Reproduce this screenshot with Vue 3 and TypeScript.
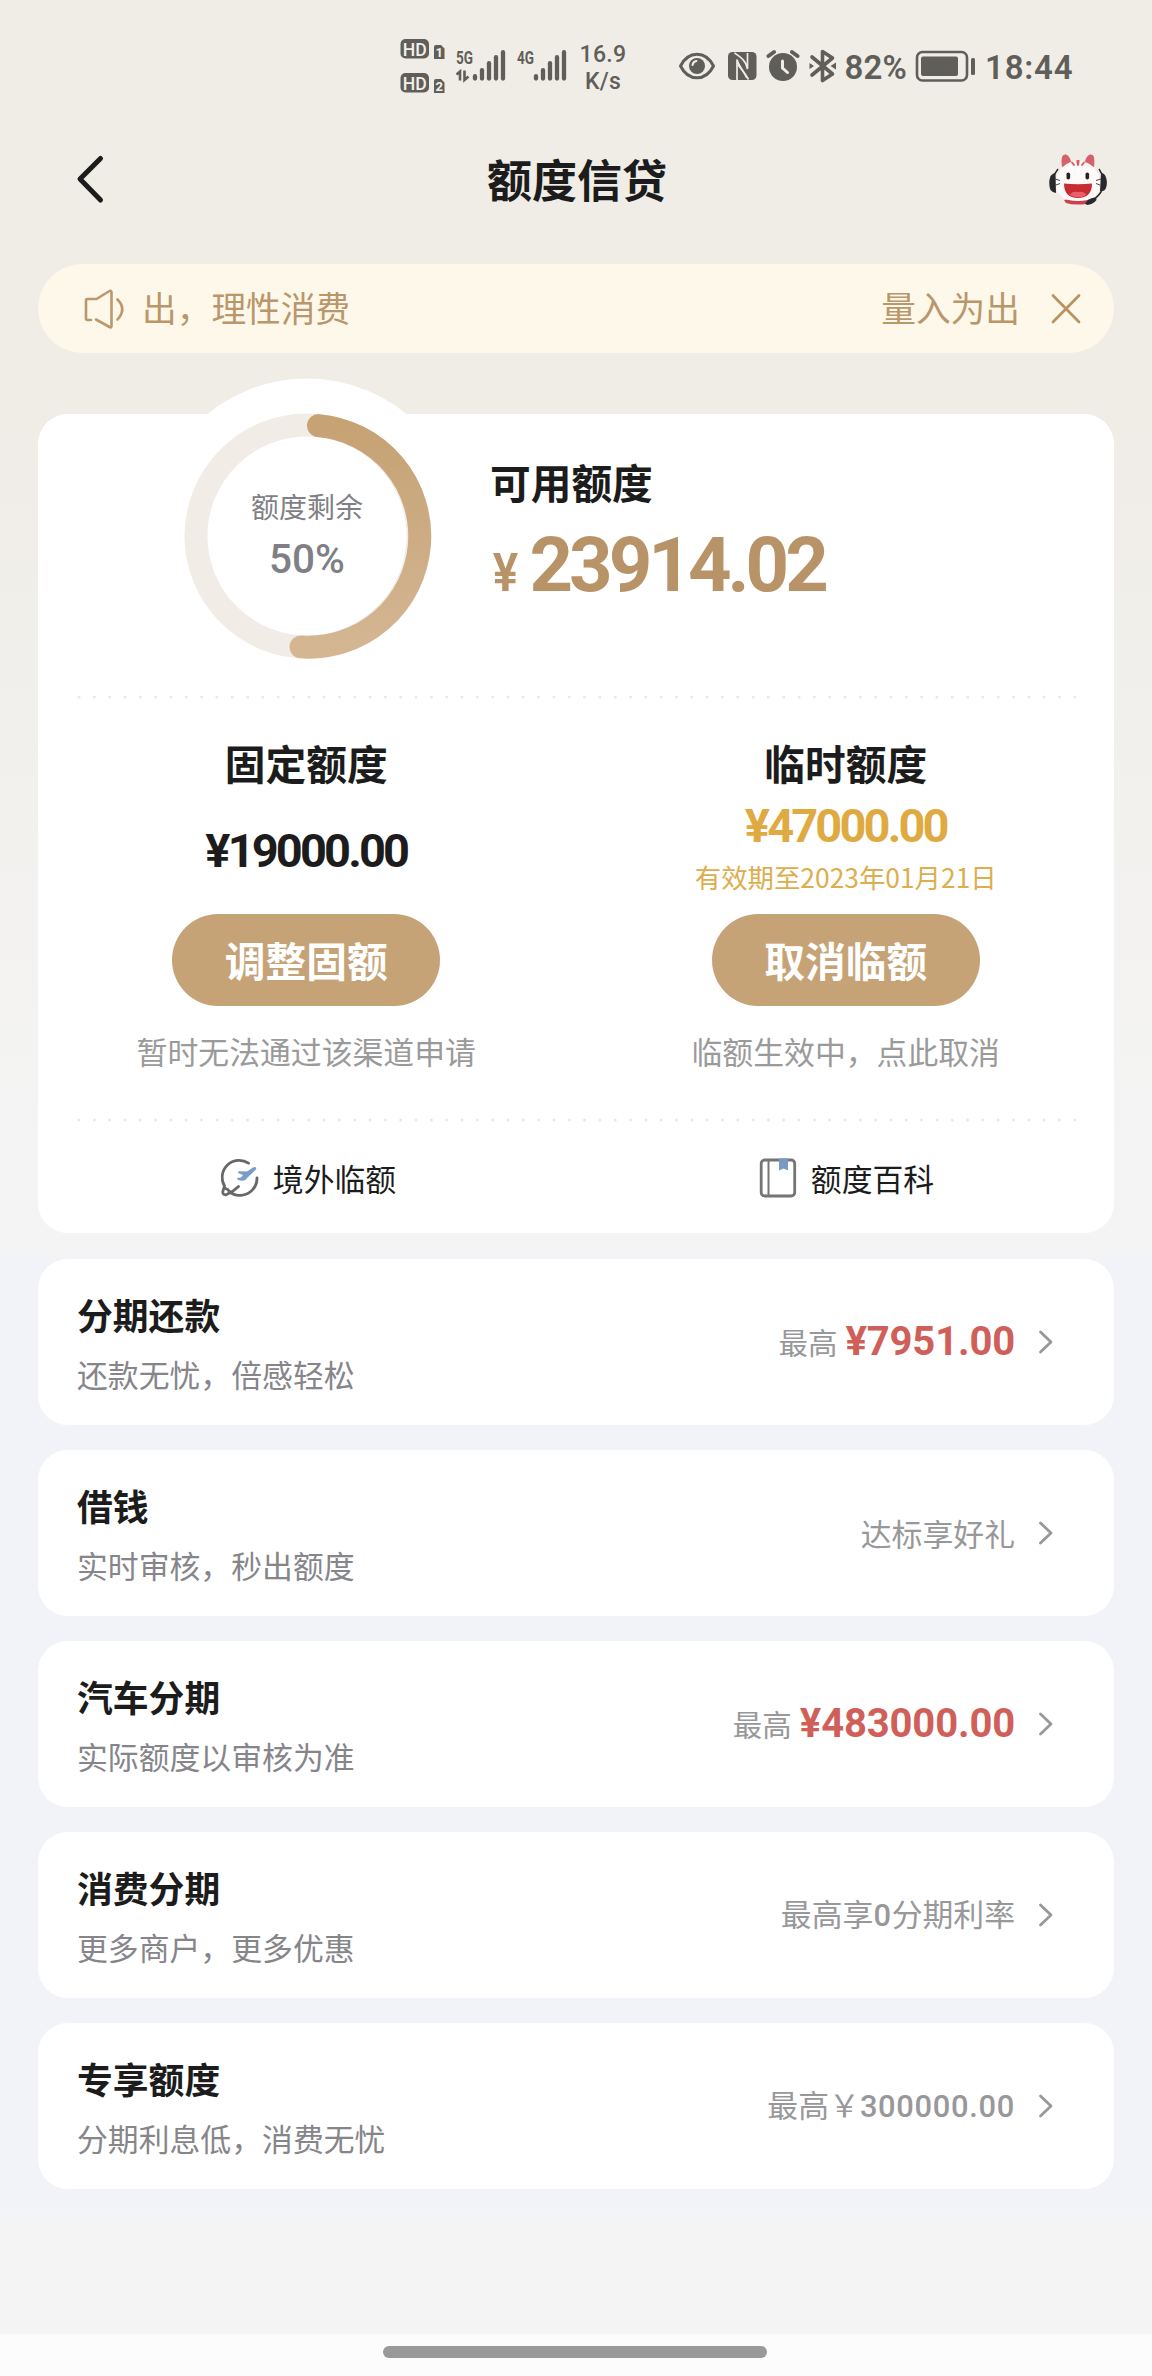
<script setup lang="ts">
interface Quota {
  title: string
  amount: string
  validity?: string
  action: string
  hint: string
  highlighted: boolean
}

interface Note {
  before: string
  number?: string
  after?: string
}

interface Product {
  title: string
  subtitle: string
  label?: string
  amount?: string
  note?: Note
}

const quotas: Quota[] = [
  { title: '固定额度', amount: '¥19000.00', action: '调整固额', hint: '暂时无法通过该渠道申请', highlighted: false },
  { title: '临时额度', amount: '¥47000.00', validity: '有效期至2023年01月21日', action: '取消临额', hint: '临额生效中，点此取消', highlighted: true },
]

const products: Product[] = [
  { title: '分期还款', subtitle: '还款无忧，倍感轻松', label: '最高', amount: '¥7951.00' },
  { title: '借钱', subtitle: '实时审核，秒出额度', note: { before: '达标享好礼' } },
  { title: '汽车分期', subtitle: '实际额度以审核为准', label: '最高', amount: '¥483000.00' },
  { title: '消费分期', subtitle: '更多商户，更多优惠', note: { before: '最高享', number: '0', after: '分期利率' } },
  { title: '专享额度', subtitle: '分期利息低，消费无忧', note: { before: '最高￥', number: '300000.00' } },
]

const signalBars = [
  { x: 2, y: 26 },
  { x: 9, y: 20 },
  { x: 16, y: 13 },
  { x: 23, y: 7 },
  { x: 30, y: 2 },
]
</script>

<template>
  <div class="screen">
    <div class="status">
      <svg class="hd" width="46" height="56" viewBox="0 0 46 56">
        <g fill="#605e59">
          <rect x="0.5" y="1" width="28.5" height="19.5" rx="5" />
          <rect x="0.5" y="35" width="28.5" height="19.5" rx="5" />
          <path d="M34 9a2 2 0 0 1 2-2h5l3.500 3.500V21H34zM34 43a2 2 0 0 1 2-2h5l3.500 3.500V55H34z" />
        </g>
        <g fill="#f3f0ea" font-family="Roboto, sans-serif" font-weight="500" text-anchor="middle">
          <text x="14.800" y="17.500" font-size="18.500" textLength="24" lengthAdjust="spacingAndGlyphs">HD</text>
          <text x="14.800" y="51.500" font-size="18.500" textLength="24" lengthAdjust="spacingAndGlyphs">HD</text>
          <text x="39.200" y="18.500" font-size="13" font-weight="700">1</text>
          <text x="39.200" y="52.800" font-size="13" font-weight="700">2</text>
        </g>
      </svg>
      <svg class="sig5" width="50" height="40" viewBox="0 -3 50 40">
        <text x="0" y="15" font-family="Roboto, sans-serif" font-weight="700" font-size="18.500" fill="#605e59" textLength="17" lengthAdjust="spacingAndGlyphs">5G</text>
        <path d="M0.500 25.500L4 22.500V31.500M8.500 21.500V31L12.500 27.500" fill="none" stroke="#605e59" stroke-width="2.600" />
        <g transform="translate(17 0)" stroke="#605e59" stroke-width="4.300" stroke-linecap="round">
          <path v-for="b in signalBars" :key="b.x" :d="`M${b.x} ${b.y + 1.200}V29.500`" />
        </g>
      </svg>
      <svg class="sig4" width="50" height="40" viewBox="0 -3 50 40">
        <text x="0" y="15" font-family="Roboto, sans-serif" font-weight="700" font-size="18.500" fill="#605e59" textLength="17" lengthAdjust="spacingAndGlyphs">4G</text>
        <g transform="translate(17 0)" stroke="#605e59" stroke-width="4.300" stroke-linecap="round">
          <path v-for="b in signalBars" :key="b.x" :d="`M${b.x} ${b.y + 1.200}V29.500`" />
        </g>
      </svg>
      <div class="speed"><span>16.9</span><span>K/s</span></div>
      <svg class="eye" width="38" height="34" viewBox="0 0 38 34">
        <path d="M2.500 17C6.500 9 12 5.200 19 5.200S31.500 9 35.500 17C31.500 25 26 28.800 19 28.800S6.500 25 2.500 17Z" fill="none" stroke="#605e59" stroke-width="3" stroke-linejoin="round" />
        <circle cx="19" cy="17" r="8" fill="#605e59" />
        <path d="M14.500 16Q15 12.500 18.500 12" fill="none" stroke="#f0ede7" stroke-width="2" stroke-linecap="round" />
      </svg>
      <svg class="nfc" width="30" height="34" viewBox="0 0 30 34">
        <rect x="1" y="3" width="28.500" height="28" rx="4.500" fill="#605e59" />
        <path d="M7.500 4C12 7 19 11 20.500 20V4M10 31V10.500C12 18 16 21 21.500 30.500" fill="none" stroke="#f0ede7" stroke-width="1.700" />
        <path d="M11 16C14 20 18 24 19.500 29" fill="none" stroke="#f0ede7" stroke-width="1.300" />
      </svg>
      <svg class="alarm" width="34" height="34" viewBox="0 0 34 34">
        <circle cx="17" cy="18" r="14" fill="#605e59" />
        <path d="M2.500 7L8 3M26 3L31.500 7" stroke="#605e59" stroke-width="4" stroke-linecap="round" />
        <path d="M16.500 12V19L21.500 23.500" fill="none" stroke="#f0ede7" stroke-width="3" stroke-linecap="round" />
      </svg>
      <svg class="bt" width="28" height="34" viewBox="0 0 28 34">
        <path d="M3 8L23.500 25L13.500 31.500V2.500L23.500 9L3 26" fill="none" stroke="#605e59" stroke-width="3.600" stroke-linejoin="round" stroke-linecap="round" />
        <path d="M0.500 14L5 17L0.500 20zM27 13.500L21.500 17L27 20.500z" fill="#605e59" />
      </svg>
      <span class="pct">82%</span>
      <svg class="battery" width="62" height="34" viewBox="0 0 62 34">
        <rect x="2" y="3" width="50" height="28.500" rx="5.500" fill="none" stroke="#605e59" stroke-width="2.600" />
        <rect x="6" y="7.500" width="37" height="19.500" rx="2" fill="#605e59" />
        <rect x="56" y="9" width="4" height="17" rx="1.500" fill="#605e59" />
      </svg>
      <span class="clock">18:44</span>
    </div>

    <header class="navbar">
      <svg class="back" width="34" height="52" viewBox="0 0 34 52">
        <path d="M27.500 4.500L7 25L27.500 46" fill="none" stroke="#1c1c1c" stroke-width="5" stroke-linecap="round" stroke-linejoin="round" />
      </svg>
      <h1>额度信贷</h1>
      <svg class="mascot" width="60" height="52" viewBox="0 0 60 52">
        <path d="M10 15Q1 26 6 37M51 15Q59 26 53 38Q49 44 43 47" fill="none" stroke="#282829" stroke-width="1.500" />
        <path d="M2.500 22Q5 19 7.500 19L8 39Q5 39 2.500 36Q0 29 2.500 22ZM57.500 22Q56 19 53 19L52 37Q56 38 58 34Q60 28 57.500 22Z" fill="#29292b" />
        <path d="M16 46Q30 43 42 45L38 50Q26 51.500 18 49Z" fill="#cb4150" />
        <path d="M14 13C12.500 2 15 0 18 .500C21 1 23 6 23.500 10ZM46 13C47.500 2 45 0 42 .500C39 1 37 6 36.500 10Z" fill="#d6606c" />
        <path d="M30 7C43 7 52 17 52 30C52 41.500 44 47 30 47S8 41.500 8 30C8 17 17 7 30 7Z" fill="#fffafa" />
        <path d="M29.300 7L30 11.500L30.700 7M24 8.500L26 11M36 8.500L34 11" fill="none" stroke="#d35965" stroke-width="1.800" stroke-linecap="round" />
        <rect x="18.500" y="18.500" width="3.600" height="7" rx="1.800" fill="#242426" />
        <rect x="37.500" y="18.500" width="3.600" height="7" rx="1.800" fill="#242426" />
        <path d="M16 29.500Q30 31 44 29.500Q44 44 30 44Q16 44 16 29.500Z" fill="#c92b32" />
        <path d="M21.500 41Q24.500 36.500 30 38Q35.500 36.500 38.500 41Q31 45.500 21.500 41Z" fill="#e7606b" />
        <path d="M7 25L12 26.500M8 31L12 29.500M53 25L48 26.500M52 31L48 29.500" stroke="#4a4646" stroke-width="1" />
        <path d="M48 43.500Q44 43 40 46L37 49.500L39 51Q45 50.500 48.500 46Z" fill="#29292b" />
      </svg>
    </header>

    <div class="notice">
      <svg class="horn" width="44" height="44" viewBox="0 0 44 44">
        <path d="M8 33H4.500Q3 33 3 31.500V13.500Q3 12 4.500 12H13.500L26.500 4Q28.500 3.500 28.500 5.500V39Q28.500 41 26.500 40L13 32.500M34.500 12.500Q44 22 34.500 32.500" fill="none" stroke="#bb986c" stroke-width="2.600" stroke-linecap="round" stroke-linejoin="round" />
      </svg>
      <div class="marquee">
        <span class="leaving">出，理性消费</span>
        <span>量入为出</span>
      </div>
      <svg class="close" width="32" height="32" viewBox="0 0 32 32">
        <path d="M3 2.500L29 29M29 2.500L3 29" stroke="#b9935f" stroke-width="2.700" stroke-linecap="round" />
      </svg>
    </div>

    <section class="card">
      <div class="overview">
        <div class="gauge">
          <svg width="316" height="316" viewBox="-158 -158 316 316">
            <defs>
              <linearGradient id="arc" x1="0" y1="0" x2="0" y2="1">
                <stop offset="0" stop-color="#c6a274" />
                <stop offset="1" stop-color="#d4b693" />
              </linearGradient>
            </defs>
            <circle r="157.500" fill="#fff" />
            <circle r="111" fill="none" stroke="#f2ece6" stroke-width="23" />
            <path d="M11.500 -110.400A111 111 0 0 1 -6 110.900" fill="none" stroke="url(#arc)" stroke-width="23" stroke-linecap="round" />
          </svg>
          <div class="gauge-label">
            <span class="gauge-name">额度剩余</span>
            <span class="gauge-value">50%</span>
          </div>
        </div>
        <div class="available">
          <h2>可用额度</h2>
          <p class="total"><small>¥</small><b>23914.02</b></p>
        </div>
      </div>

      <svg class="dots" width="1004" height="4"><path d="M3 2H1000" stroke="#e8e8ea" stroke-width="3" stroke-linecap="round" stroke-dasharray="0 15.320" /></svg>

      <div class="quotas">
        <div v-for="q in quotas" :key="q.title" class="quota" :class="{ gold: q.highlighted }">
          <h2>{{ q.title }}</h2>
          <p class="amount">{{ q.amount }}</p>
          <p v-if="q.validity" class="validity">{{ q.validity }}</p>
          <button type="button">{{ q.action }}</button>
          <p class="hint">{{ q.hint }}</p>
        </div>
      </div>

      <svg class="dots" width="1004" height="4"><path d="M3 2H1000" stroke="#e8e8ea" stroke-width="3" stroke-linecap="round" stroke-dasharray="0 15.320" /></svg>

      <div class="links">
        <div class="link">
          <svg width="38" height="40" viewBox="0 0 38 40">
            <path d="M27.500 5.200A17 17 0 0 0 3.500 28L1.800 33.500Q1.500 37 5 36.800Q12 34 17.500 28.500" fill="none" stroke="#68686a" stroke-width="2.800" stroke-linecap="round" />
            <path d="M3.500 30Q7 31 8.500 33.500Q13 38 20 37.300A17 17 0 0 0 36 20" fill="none" stroke="#68686a" stroke-width="2.800" stroke-linecap="round" />
            <path d="M35 9.500Q34 8.500 32 9.500L26 13.500L17.500 13.200L17 15L22 17L20 19.500L16 20L17 22Q24 24 26 20L34.500 12Q35.700 10.500 35 9.500Z" fill="#7b9cc6" />
          </svg>
          <span>境外临额</span>
        </div>
        <div class="link">
          <svg width="38" height="40" viewBox="0 0 38 40">
            <rect x="2.200" y="2" width="33.500" height="36" rx="3.500" fill="none" stroke="#757577" stroke-width="2.800" />
            <path d="M9.500 2V38" stroke="#757577" stroke-width="2" />
            <path d="M20 .500H29V12.500L24.500 10.500L20 12.500Z" fill="#7899c2" />
          </svg>
          <span>额度百科</span>
        </div>
      </div>
    </section>

    <main class="products">
      <article v-for="p in products" :key="p.title" class="product">
        <div class="info">
          <h3>{{ p.title }}</h3>
          <p>{{ p.subtitle }}</p>
        </div>
        <div class="side">
          <span v-if="p.label" class="label">{{ p.label }}</span>
          <span v-if="p.amount" class="red">{{ p.amount }}</span>
          <span v-if="p.note" class="note">{{ p.note.before }}<b v-if="p.note.number">{{ p.note.number }}</b>{{ p.note.after }}</span>
          <svg width="16" height="26" viewBox="0 0 16 26">
            <path d="M2.500 3L13 13L2.500 23" fill="none" stroke="#98989a" stroke-width="2.800" stroke-linecap="round" stroke-linejoin="round" />
          </svg>
        </div>
      </article>
    </main>

    <footer class="home"><i></i></footer>
  </div>
</template>

<style>
body {
  margin: 0;
  background: #f4f4f4;
}
</style>

<style scoped>
.screen {
  width: 1152px;
  height: 2376px;
  box-sizing: border-box;
  overflow: hidden;
  display: flex;
  flex-direction: column;
  color: #1c1c1c;
  font-family: "Noto Sans CJK SC", sans-serif;
  background: linear-gradient(#f0ede7 0, #f0ede7 420px, #f4f4f4 1150px, #f4f4f4 100%);
}
h1, h2, h3, p { margin: 0; }
svg { display: block; flex: none; }

.status {
  height: 132px;
  display: flex;
  align-items: center;
  padding-left: 400px;
  box-sizing: border-box;
  color: #605e59;
  font-family: Roboto, sans-serif;
}
.hd { margin-right: 10px; }
.sig5 { margin-right: 11px; }
.sig4 { margin-right: 11px; }
.speed {
  width: 50px;
  display: flex;
  flex-direction: column;
  align-items: center;
  font-size: 23px;
  font-weight: 500;
  line-height: 27.500px;
  letter-spacing: .3px;
  margin-top: 4px;
}
.eye { margin-left: 49.500px; margin-right: 11px; }
.nfc { margin-right: 9px; }
.alarm { margin-right: 9px; }
.bt { margin-right: 8px; }
.pct, .clock { font-size: 33px; font-weight: 600; line-height: 40px; margin-top: 4px; }
.pct { width: 70px; letter-spacing: .2px; }
.clock { margin-left: 8.500px; letter-spacing: .8px; }

.navbar {
  height: 96px;
  display: flex;
  align-items: center;
  justify-content: space-between;
  padding: 0 44px 0 73px;
}
.back { margin-right: -7px; }
.navbar h1 { font-size: 45px; font-weight: 700; line-height: 60px; margin: -3px 0 0 6px; }

.notice {
  margin: 36px 38px 0;
  height: 89px;
  border-radius: 45px;
  background: #fef8ea;
  display: flex;
  align-items: center;
  color: #b9976a;
  font-size: 34.700px;
  line-height: 50px;
}
.horn { margin-left: 45px; margin-right: 18px; }
.marquee {
  width: 875px;
  margin-top: -4px;
  display: flex;
  justify-content: space-between;
  overflow: hidden;
}
.leaving { margin-left: -3px; }
.close { margin-left: 30px; }

.card {
  margin: 61px 38px 0;
  height: 819px;
  border-radius: 30px;
  background: #fff;
  display: flex;
  flex-direction: column;
}
.overview { height: 281px; display: flex; }
.gauge { width: 316px; height: 316px; margin: -36px 0 0 111px; display: grid; flex: none; }
.gauge > * { grid-area: 1 / 1; }
.gauge-label { z-index: 1; display: flex; flex-direction: column; align-items: center; padding-top: 108px; color: #7f7f85; }
.gauge-name { font-size: 28px; line-height: 40px; }
.gauge-value { font: 500 40.500px/48px Roboto, sans-serif; margin-top: 9px; }
.available { margin-left: 25px; padding-top: 38px; }
h2 { font-size: 40.700px; font-weight: 700; line-height: 60px; }
.total { display: flex; align-items: baseline; color: #b99368; font-family: Roboto, sans-serif; line-height: 88px; margin-top: 9px; }
.total small { width: 36.500px; padding-left: 3px; font-size: 53px; font-weight: 600; transform: scaleX(.900); transform-origin: left; }
.total b { font-size: 76px; font-weight: 700; letter-spacing: -4px; }

.dots { margin-left: 38px; }

.quotas { display: flex; height: 419px; }
.quota { flex: 1; display: flex; flex-direction: column; align-items: center; padding-top: 34px; box-sizing: border-box; }
.quota:first-child { padding-right: 2px; }
.quota:last-child { padding-left: 1px; }
.amount { font: 700 47px/56px Roboto, sans-serif; letter-spacing: -2.850px; margin: 30px 0 35px; }
.gold .amount { color: #e0aa42; margin: 5px 0 0; }
.validity { height: 38px; line-height: 38px; font-size: 26.400px; color: #dcae4e; margin: 4px 0 18px; }
button {
  width: 268px;
  height: 92px;
  border: 0;
  padding: 0;
  border-radius: 46px;
  background: #c6a376;
  color: #fff;
  font: 700 40.700px/88px "Noto Sans CJK SC", sans-serif;
}
.hint { margin-top: 23px; font-size: 30.850px; line-height: 44px; color: #9a9a9a; }

.links { display: flex; padding-top: 34px; }
.link { flex: 1; display: flex; justify-content: center; align-items: center; gap: 14px; height: 44px; font-size: 30.850px; line-height: 44px; padding-left: 3px; }
.link span { margin-top: -1px; }

.products {
  background: #f2f3f8;
  margin-top: 23px;
  padding: 3px 38px 26px;
  display: flex;
  flex-direction: column;
  gap: 25px;
}
.product {
  height: 166px;
  border-radius: 30px;
  background: #fff;
  display: flex;
  justify-content: space-between;
  align-items: center;
  padding: 0 60px 0 39px;
}
h3 { font-size: 35.800px; font-weight: 700; line-height: 54px; margin-top: -1px; }
.info p { font-size: 30.850px; line-height: 46px; margin-top: 10px; color: #85858a; }
.side { display: flex; align-items: center; color: #98989a; }
.label { font-size: 29.500px; line-height: 44px; margin: -2px 8px 0 0; }
.red { font: 700 40px/48px Roboto, sans-serif; letter-spacing: -.150px; color: #d05f5a; }
.note { font-size: 30.850px; line-height: 44px; margin-top: -1px; }
.note b { font-family: Roboto, sans-serif; font-weight: 500; letter-spacing: .700px; }
.side svg { margin-left: 23px; }

.home {
  margin-top: auto;
  height: 42px;
  background: #fcfcfc;
  display: flex;
  justify-content: center;
}
.home i { width: 384px; height: 12px; margin: 12px 2px 0 0; border-radius: 6px; background: #999; }
</style>
